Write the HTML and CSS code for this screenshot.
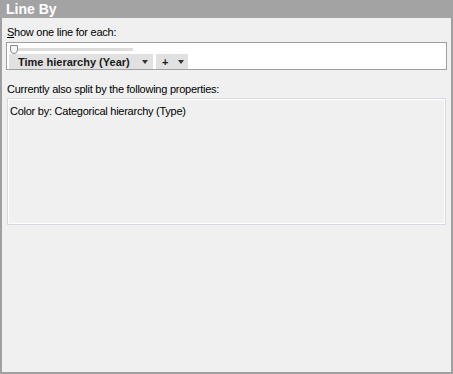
FILE: index.html
```html
<!DOCTYPE html>
<html lang="en">
<head>
    <meta charset="UTF-8">
    <title>Line By</title>
    <link rel="stylesheet" href="styles.css">
</head>
<body>
    <div class="panel">
        <div class="header">Line By</div>
        <div class="content">
            <div class="label"><u>S</u>how one line for each:</div>
            <div class="picker">
                <div class="slider">
                    <div class="track"></div>
                    <div class="thumb"></div>
                </div>
                <div class="buttons">
                    <div class="dropdown wide">
                        <span>Time hierarchy (Year)</span>
                        <span class="arrow"></span>
                    </div>
                    <div class="dropdown plus">
                        <span>+</span>
                        <span class="arrow"></span>
                    </div>
                </div>
            </div>
            <div class="label split">Currently also split by the following properties:</div>
            <div class="listbox">
                <div class="item">Color by: Categorical hierarchy (Type)</div>
            </div>
        </div>
    </div>
</body>
</html>
```

FILE: styles.css
```css
body {
    margin: 0;
    background: #f0f0f0;
    font-family: 'Liberation Sans', Arial, sans-serif;
    font-size: 11px;
    color: #000;
}
.panel {
    width: 453px;
    height: 374px;
    box-sizing: border-box;
    border: 2px solid #a0a0a0;
    border-top: 0;
    background: #f0f0f0;
}
.header {
    background: #a3a3a3;
    color: #fff;
    font-weight: bold;
    font-size: 14px;
    height: 18px;
    line-height: 18px;
    margin: 0 -2px;
    padding-left: 6px;
}
.content {
    padding: 8px 4px 0 5px;
}
.label {
    line-height: 13px;
    letter-spacing: -0.25px;
}
.split {
    margin-top: 13px;
}
.picker {
    margin-top: 3px;
    margin-left: -1px;
    width: 441px;
    height: 28px;
    box-sizing: border-box;
    border: 1px solid #a0a0a0;
    background: #fff;
    padding: 2px 0 0 2px;
}
.slider {
    position: relative;
    height: 8px;
}
.track {
    position: absolute;
    left: 4px;
    top: 3px;
    width: 120px;
    height: 3px;
    background: #dcdcdc;
}
.thumb {
    position: absolute;
    left: 1px;
    top: 0;
    width: 6px;
    height: 7px;
    background: #f4f4f4;
    border: 1px solid #8a8a8a;
    border-radius: 0 0 4px 4px;
}
.buttons {
    display: flex;
    gap: 3px;
    margin-top: 1px;
}
.dropdown {
    display: flex;
    align-items: center;
    justify-content: space-between;
    height: 15px;
    background: #e1e1e1;
    font-weight: bold;
    font-size: 11px;
    color: #1a1a1a;
    box-sizing: border-box;
}
.wide {
    width: 144px;
    padding: 0 5px 0 9px;
}
.plus {
    width: 32px;
    padding: 0 4px 0 6px;
}
.arrow {
    width: 0;
    height: 0;
    border-left: 3.5px solid transparent;
    border-right: 3.5px solid transparent;
    border-top: 4px solid #333;
}
.listbox {
    margin-top: 2px;
    width: 439px;
    height: 127px;
    box-sizing: border-box;
    border: 1px solid #d4dae0;
    box-shadow: inset 0 0 0 1px #fff;
    background: #f0f0f0;
    padding: 6px 2px;
}
.item {
    line-height: 13px;
    letter-spacing: -0.25px;
}
```
